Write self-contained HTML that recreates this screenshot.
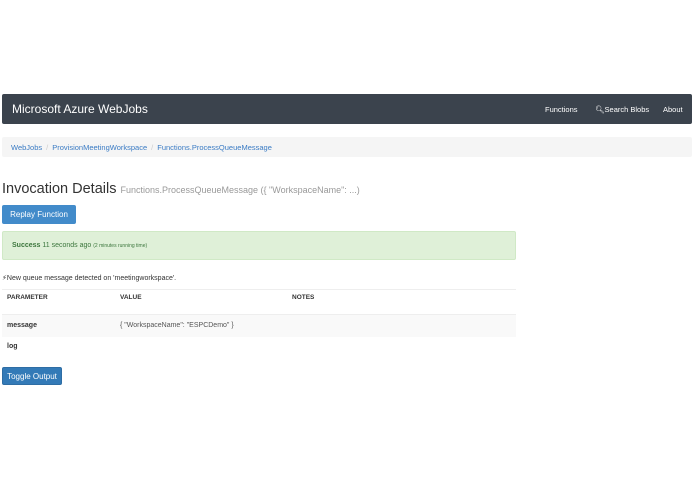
<!DOCTYPE html>
<html><head><style>
body{margin:0;width:695px;height:494px;background:#fff;font-family:"Liberation Sans",sans-serif;position:relative;overflow:hidden}
.a{position:absolute}
.nav{left:2px;top:94px;width:690px;height:30px;background:#3b434d;border-radius:2px}
.brand{left:10px;top:8px;color:#fff;font-size:12px}
.nl{top:11px;color:#fff;font-size:7.5px;white-space:nowrap}
.bc{left:2px;top:137px;width:690px;height:20px;background:#f5f5f5;border-radius:2px;font-size:7.5px;color:#3a7bc4}
.bc span{color:#ccc;margin:0 4px}
.btn{background:#428bca;color:#fff;font-size:8px;border-radius:2px;text-align:center}
</style></head><body>
<div class="a nav">
<div class="a brand">Microsoft Azure WebJobs</div>
<div class="a nl" style="left:543px">Functions</div>
<div class="a nl" style="left:593px">&#x1F50D;&#xFE0E;Search Blobs</div>
<div class="a nl" style="left:661px">About</div>
</div>
<div class="a bc"><div class="a" style="left:9px;top:6px;white-space:nowrap">WebJobs<span>/</span>ProvisionMeetingWorkspace<span>/</span>Functions.ProcessQueueMessage</div></div>
<div class="a" style="left:2px;top:181px;font-size:14.5px;color:#333;white-space:nowrap">Invocation Details <span style="font-size:9px;color:#999">Functions.ProcessQueueMessage ({ "WorkspaceName": ...)</span></div>
<div class="a btn" style="left:2px;top:205px;width:74px;height:19px;line-height:19px">Replay Function</div>
<div class="a" style="left:2px;top:231px;width:514px;height:29px;background:#dff0d8;border:1px solid #d0e9c6;border-radius:2px;box-sizing:border-box"><div class="a" style="left:9px;top:10px;font-size:7px;color:#3c763d;white-space:nowrap"><b>Success</b> 11 seconds ago <span style="font-size:5px">(2 minutes running time)</span></div></div>
<div class="a" style="left:2px;top:274px;font-size:7px;color:#333">&#x26A1;&#xFE0E;New queue message detected on 'meetingworkspace'.</div>
<div class="a" style="left:2px;top:289px;width:514px;border-top:1px solid #eee"></div>
<div class="a" style="left:7px;top:294px;font-size:6.5px;font-weight:bold;color:#333">PARAMETER</div>
<div class="a" style="left:120px;top:294px;font-size:6.5px;font-weight:bold;color:#333">VALUE</div>
<div class="a" style="left:292px;top:294px;font-size:6.5px;font-weight:bold;color:#333">NOTES</div>
<div class="a" style="left:2px;top:314px;width:514px;height:22px;background:#f9f9f9;border-top:1px solid #eee"></div>
<div class="a" style="left:7px;top:322px;font-size:7px;font-weight:bold;color:#333">message</div>
<div class="a" style="left:120px;top:322px;font-size:7px;color:#555">{ "WorkspaceName": "ESPCDemo" }</div>
<div class="a" style="left:7px;top:343px;font-size:7px;font-weight:bold;color:#333">log</div>
<div class="a btn" style="left:2px;top:367px;width:60px;height:18px;line-height:18px;background:#337ab7;border:1px solid #2e6da4;box-sizing:border-box">Toggle Output</div>
</body></html>
